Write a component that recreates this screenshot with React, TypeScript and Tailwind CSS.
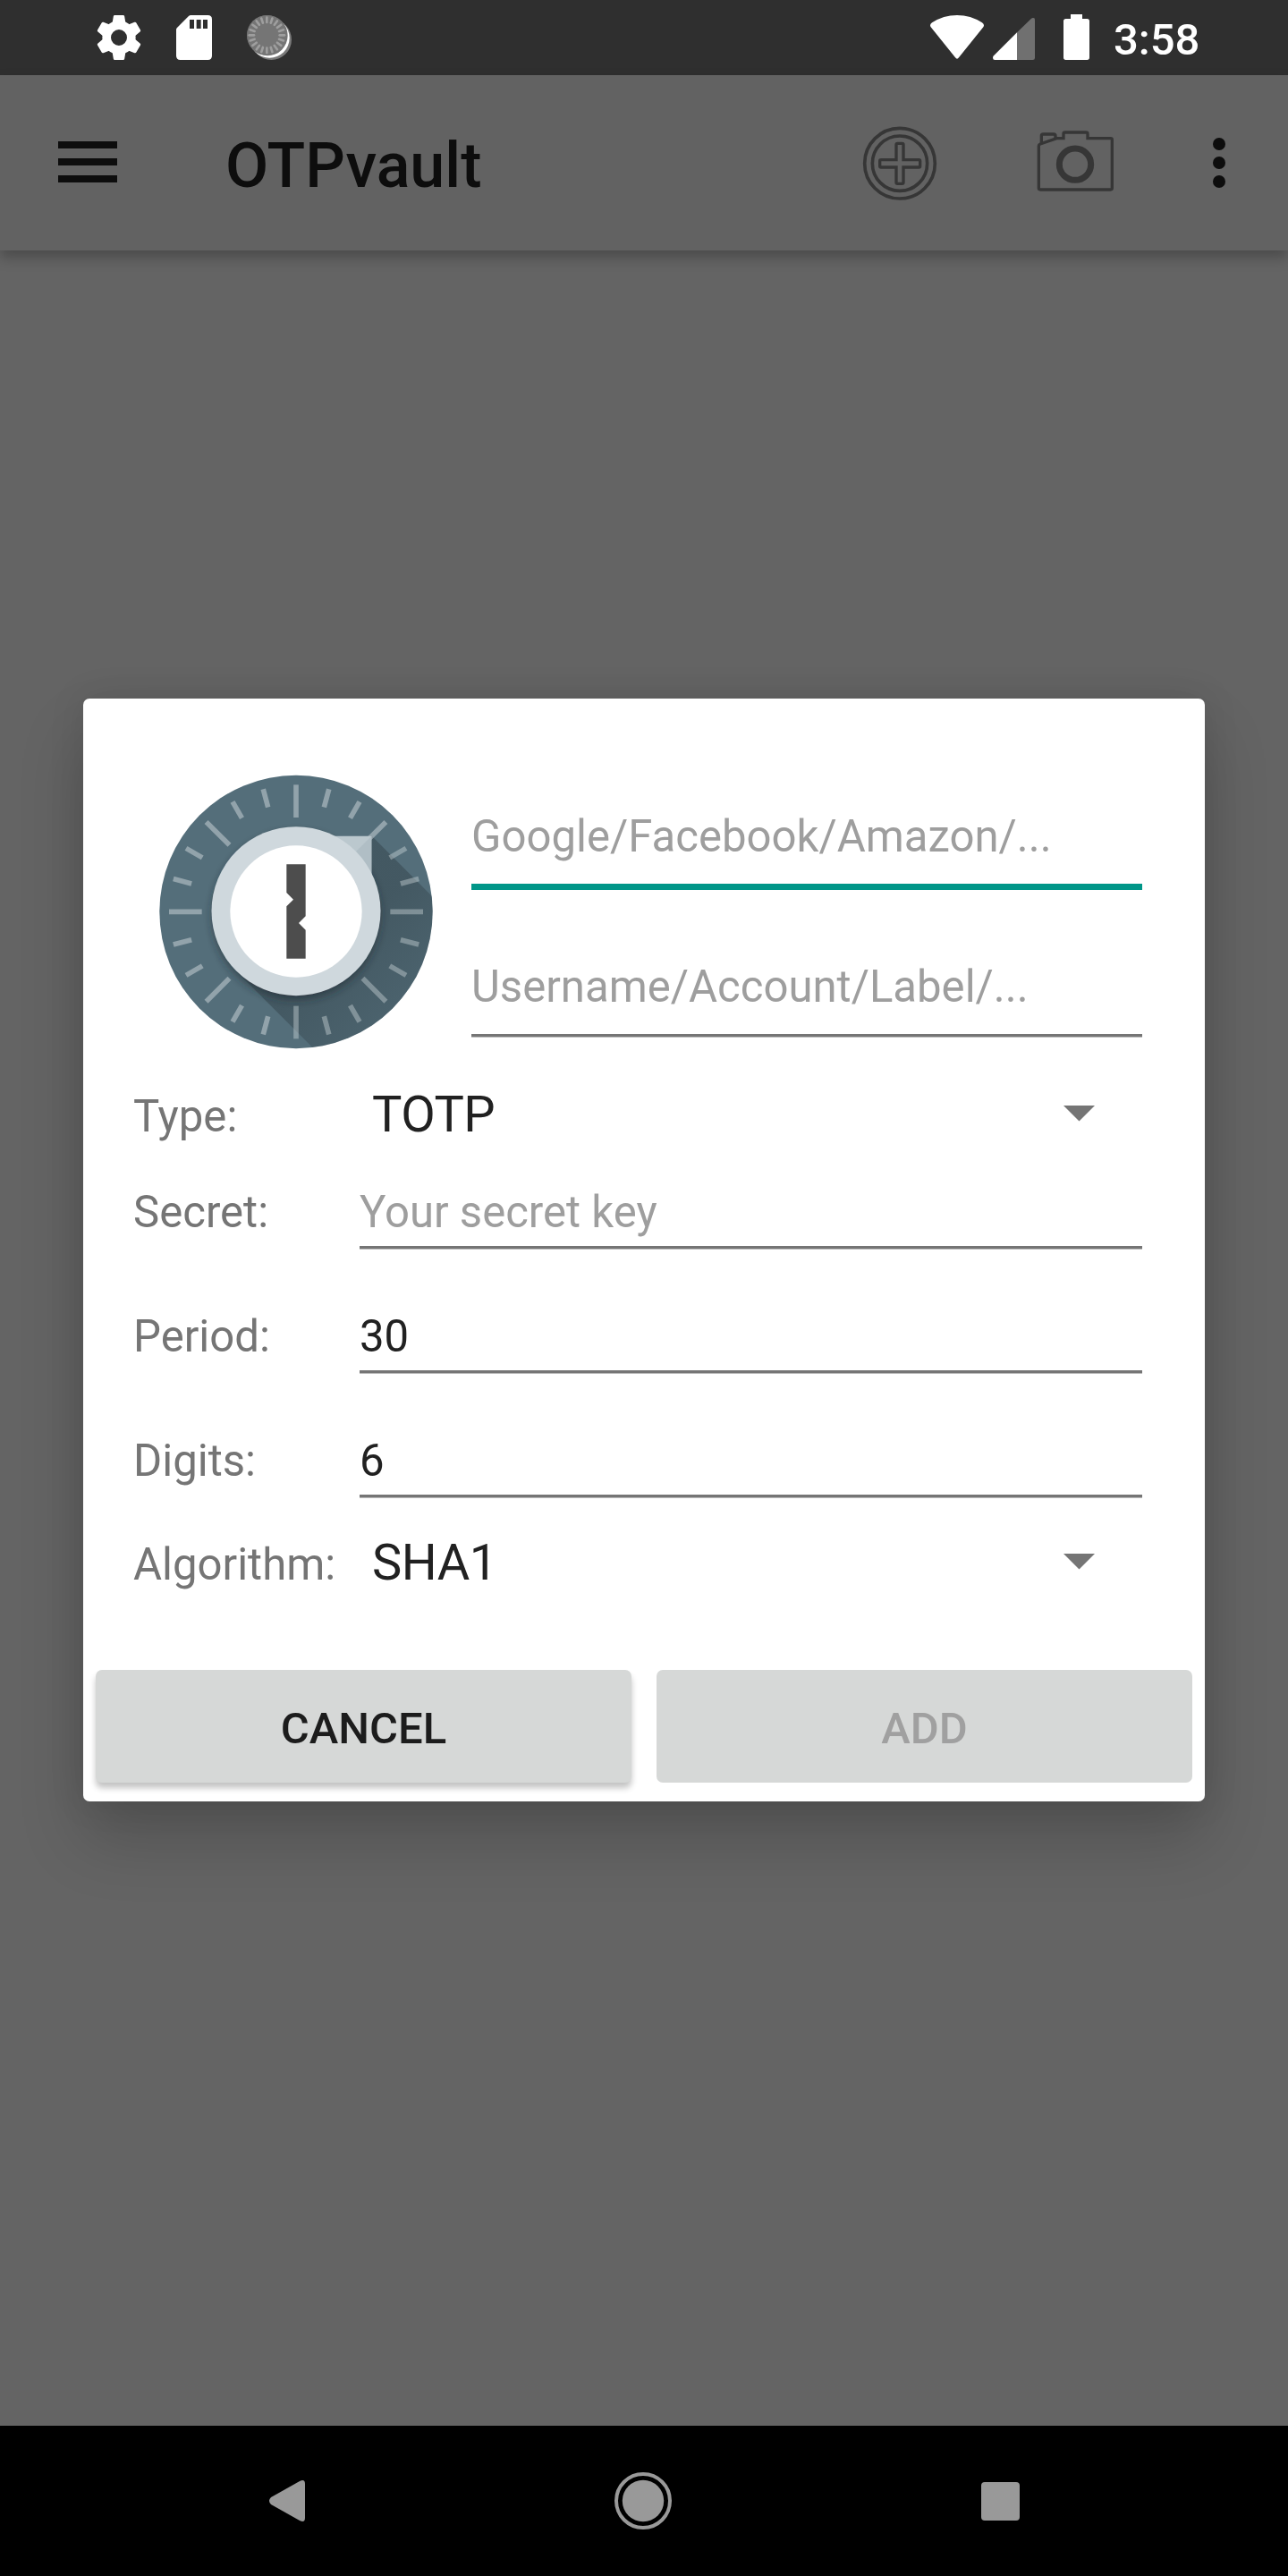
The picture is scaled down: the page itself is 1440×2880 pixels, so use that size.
import type { ReactNode } from "react";

const LOGO_TICKS = Array.from({ length: 24 }, (_, i) => i * 15);
const SPINNER_TICKS = Array.from({ length: 20 }, (_, i) => i * 18);
const GEAR_TEETH = [0, 60, 120, 180, 240, 300];

function GearIcon() {
  return (
    <svg viewBox="54 51 150 150" className="h-[50px] w-[50px]" fill="#fff">
      <circle cx="129" cy="126" r="41.5" fill="none" stroke="#fff" strokeWidth="29" />
      {GEAR_TEETH.map((a) => (
        <path
          key={a}
          d="M115 51H143Q147 51 147.500 55L151.500 79L146 90H112L106.500 79L110.500 55Q111 51 115 51Z"
          transform={`rotate(${a} 129 126)`}
        />
      ))}
    </svg>
  );
}

function SdCardIcon() {
  return (
    <svg viewBox="321 51 120 150" className="h-[50px] w-10">
      <path
        d="M370 51H427Q441 51 441 65V187Q441 201 427 201H335Q321 201 321 187V100Q321 96 324 93L362 55Q366 51 370 51Z"
        fill="#fff"
      />
      <path d="M366 66H381V96H366ZM389 66H404V96H389ZM411 66H426V96H411Z" fill="#2f2f2f" />
    </svg>
  );
}

function VaultStatusIcon() {
  return (
    <svg viewBox="558 51 150 150" className="h-[50px] w-[50px]">
      <circle cx="640" cy="133" r="68" fill="#7a7a7a" />
      <circle cx="634" cy="127" r="67" fill="#fff" />
      <circle cx="627" cy="119" r="68" fill="#757575" />
      <circle cx="625" cy="118" r="67" fill="#757575" />
      {SPINNER_TICKS.map((a) => (
        <path
          key={a}
          d="M625 59V75"
          stroke="#9e9e9e"
          strokeWidth="8"
          strokeLinecap="round"
          transform={`rotate(${a} 625 118)`}
        />
      ))}
    </svg>
  );
}

function WifiIcon() {
  return (
    <svg viewBox="30 51 180 150" className="h-[50px] w-[60px]">
      <path
        d="M30 85Q30 80 36 76Q74 51 120 51Q166 51 204 76Q210 80 210 85Q210 88 208 91L126 193Q120 201 114 193L32 91Q30 88 30 85Z"
        fill="#fff"
      />
    </svg>
  );
}

function SignalIcon() {
  return (
    <svg viewBox="240 51 141 150" className="h-[50px] w-[47px]">
      <path d="M321 109L369 62Q374 58 379 61Q381 63 381 67V194Q381 201 374 201H321Z" fill="#707070" />
      <path d="M321 109V201H247Q240 201 240 194Q240 190 243 187Z" fill="#fff" />
    </svg>
  );
}

function BatteryIcon() {
  return (
    <svg viewBox="477 51 87 150" className="h-[50px] w-[29px] overflow-visible">
      <path
        d="M501 48H540V63H556Q564 63 564 71V193Q564 201 556 201H485Q477 201 477 193V71Q477 63 485 63H501Z"
        fill="#fff"
      />
    </svg>
  );
}

function StatusBar() {
  return (
    <header className="flex h-[84px] items-center bg-[#2f2f2f] pr-[97px] pl-[108px]">
      <div className="flex gap-[39px]">
        <GearIcon />
        <SdCardIcon />
        <VaultStatusIcon />
      </div>
      <div className="ml-auto flex items-center">
        <WifiIcon />
        <div className="ml-[10px]">
          <SignalIcon />
        </div>
        <div className="ml-[32px]">
          <BatteryIcon />
        </div>
        <span className="ml-[27px] w-[98px] pt-[5px] text-[49px] leading-[64px] font-medium whitespace-nowrap text-white">
          3:58
        </span>
      </div>
    </header>
  );
}

function AddIcon() {
  return (
    <svg viewBox="42 33 252 249" className="h-[83px] w-[84px]" fill="none" stroke="#363636" strokeWidth="11">
      <circle cx="168" cy="158" r="118" />
      <circle cx="168" cy="158" r="92" />
      <path
        d="M160 91H176Q180 91 180 95V146H232Q236 146 236 150V167Q236 171 232 171H180V222Q180 226 176 226H160Q156 226 156 222V171H105Q101 171 101 167V150Q101 146 105 146H156V95Q156 91 160 91Z"
        strokeWidth="10"
      />
    </svg>
  );
}

function CameraIcon() {
  return (
    <svg viewBox="624 45 264 210" className="h-[70px] w-[88px]" fill="none" stroke="#363636" strokeWidth="10">
      <path d="M639 93L694 74H717V59Q717 54 722 54H793Q798 54 798 59V74H875Q880 74 880 79V241Q880 246 875 246H639Q634 246 634 241V99Q634 95 639 93Z" />
      <path d="M643 91V66Q643 60 649 60H684Q690 60 690 66V75" />
      <circle cx="756" cy="161" r="53" strokeWidth="21" />
    </svg>
  );
}

function Toolbar() {
  return (
    <div className="relative flex h-[196px] items-center bg-[#626262] pr-[70px] pl-[65px] shadow-[0_8px_14px_rgba(0,0,0,0.25)]">
      <div className="mb-[3px] flex flex-col gap-[11px]">
        <div className="h-2 w-[66px] bg-[#0d0d0d]" />
        <div className="h-2 w-[66px] bg-[#0d0d0d]" />
        <div className="h-2 w-[66px] bg-[#0d0d0d]" />
      </div>
      <h1 className="ml-[121px] pt-[6px] text-[70px] leading-[84px] font-medium text-[#0d0d0d]">OTPvault</h1>
      <div className="ml-auto flex items-center gap-[110px]">
        <AddIcon />
        <div className="mb-1">
          <CameraIcon />
        </div>
        <div className="flex flex-col gap-[7px]">
          <div className="size-[14px] rounded-full bg-[#0d0d0d]" />
          <div className="size-[14px] rounded-full bg-[#0d0d0d]" />
          <div className="size-[14px] rounded-full bg-[#0d0d0d]" />
        </div>
      </div>
    </div>
  );
}

function VaultLogo() {
  return (
    <svg viewBox="294 318 918 921" className="h-[307px] w-[306px]">
      <defs>
        <clipPath id="disc">
          <circle cx="753" cy="778.500" r="458" />
        </clipPath>
        <linearGradient id="cast" gradientUnits="userSpaceOnUse" x1="753" y1="778" x2="1077" y2="1102">
          <stop offset="0.400" stopColor="#263238" stopOpacity="0.360" />
          <stop offset="1" stopColor="#263238" stopOpacity="0.200" />
        </linearGradient>
        <filter id="soft" x="-20%" y="-20%" width="140%" height="140%">
          <feGaussianBlur stdDeviation="14" />
        </filter>
      </defs>
      <circle cx="753" cy="778.500" r="458" fill="#546e7a" />
      <g clipPath="url(#disc)">
        <path d="M1005 522L1300 817V1300H875L553 978Z" fill="url(#cast)" />
        <circle cx="753" cy="792" r="282" fill="#1c2a30" fillOpacity="0.550" filter="url(#soft)" />
      </g>
      {LOGO_TICKS.map((a) => (
        <path
          key={a}
          d={a % 45 === 0 ? "M753 352V462" : "M753 352V415"}
          stroke="#cfd8dc"
          strokeOpacity={a >= 60 && a <= 180 ? 0.42 : 0.5}
          strokeWidth="17"
          transform={`rotate(${a} 753 778)`}
        />
      ))}
      <path d="M870 524H1006V660Z" fill="#bbc8ce" />
      <path d="M1006 524V660L930 600Z" fill="#b0bec5" />
      <circle cx="753" cy="776" r="283.500" fill="#cfd8dd" />
      <circle cx="753" cy="777" r="221" fill="#fff" />
      <path d="M721 619H785V793L762 816L785 839V935H721V760L744 737L721 714Z" fill="#4d4d4d" />
    </svg>
  );
}

function FieldRow({ label, value, hint = false }: { label: string; value: string; hint?: boolean }) {
  return (
    <div className="flex items-baseline">
      <div className="w-[253px] text-[49.1px] leading-[64px] text-[#757575]">{label}</div>
      <div className="h-[73px] w-[875px] border-b-[3px] border-[#757575] text-[49.1px] leading-[64px] shadow-[0_1px_0_#b9b9b9]">
        <span className={hint ? "text-[#9e9e9e]" : "text-[#212121]"}>{value}</span>
      </div>
    </div>
  );
}

function SpinnerRow({ label, value }: { label: string; value: string }) {
  return (
    <div className="flex h-16 items-baseline">
      <div className="w-[267px] text-[49.1px] leading-[64px] whitespace-nowrap text-[#757575]">{label}</div>
      <div className="w-[773px] text-[56px] leading-[64px] tracking-[-0.5px] text-[#212121]">{value}</div>
      <svg viewBox="0 0 35 17.500" className="mt-[22px] h-[17.5px] w-[35px] self-start">
        <path d="M0 0H35L17.500 17.500Z" fill="#757575" />
      </svg>
    </div>
  );
}

function DialogButton({ children, disabled = false }: { children: ReactNode; disabled?: boolean }) {
  return (
    <button
      disabled={disabled}
      className={
        disabled
          ? "h-[126px] flex-1 rounded-[7px] bg-[#d6d8d7] pt-[5px] text-[49px] leading-[64px] font-medium text-[#a0a0a0]"
          : "h-[126px] flex-1 rounded-[7px] bg-[#d6d8d7] pt-[5px] text-[49px] leading-[64px] font-medium text-[#1c1c1c] shadow-[0_6px_7px_rgba(0,0,0,0.24)]"
      }
    >
      {children}
    </button>
  );
}

function AddAccountDialog() {
  return (
    <section className="h-[1233px] w-[1254px] rounded-[7px] bg-white shadow-[0_42px_72px_rgba(0,0,0,0.19),0_0_40px_rgba(0,0,0,0.1)]">
      <div className="flex h-[433px] pl-[85px]">
        <div className="pt-[85px]">
          <VaultLogo />
        </div>
        <div className="ml-[43px] w-[750px] pt-[122px] text-[49.1px] leading-[64px] text-[#9e9e9e]">
          <div className="h-[92px] border-b-[7px] border-[#009688]">Google/Facebook/Amazon/...</div>
          <div className="mt-[76px] h-[88px] border-b-[3px] border-[#757575] shadow-[0_1px_0_#b9b9b9]">
            Username/Account/Label/...
          </div>
        </div>
      </div>
      <div className="flex flex-col pl-[56px]">
        <SpinnerRow label="Type:" value="TOTP" />
        <div className="mt-[45px] flex flex-col gap-[66px]">
          <FieldRow label="Secret:" value="Your secret key" hint />
          <FieldRow label="Period:" value="30" />
          <FieldRow label="Digits:" value="6" />
        </div>
        <div className="mt-[41px]">
          <SpinnerRow label="Algorithm:" value="SHA1" />
        </div>
      </div>
      <div className="mt-[88px] flex gap-7 px-[14px]">
        <DialogButton>CANCEL</DialogButton>
        <DialogButton disabled>ADD</DialogButton>
      </div>
    </section>
  );
}

function NavigationBar() {
  return (
    <nav className="flex h-[168px] items-center justify-between bg-black pr-[300px] pl-[301px]">
      <svg viewBox="0 0 40 46" className="h-[46px] w-10">
        <path d="M2 19L34 1Q40 -2 40 4V42Q40 48 34 45L2 27Q-2 23 2 19Z" fill="#999" />
      </svg>
      <svg viewBox="0 0 64 64" className="h-16 w-16">
        <circle cx="32" cy="32" r="30" fill="none" stroke="#999" strokeWidth="4" />
        <circle cx="32" cy="32" r="23.200" fill="#999" />
      </svg>
      <div className="size-[43px] rounded-[4px] bg-[#999]" />
    </nav>
  );
}

export default function App() {
  return (
    <div className="relative flex h-[2880px] w-[1440px] flex-col overflow-hidden bg-[#646464] font-[Roboto,sans-serif]">
      <StatusBar />
      <Toolbar />
      <main className="flex-1" />
      <NavigationBar />
      <div className="absolute inset-x-0 top-[781px] flex justify-center">
        <AddAccountDialog />
      </div>
    </div>
  );
}
